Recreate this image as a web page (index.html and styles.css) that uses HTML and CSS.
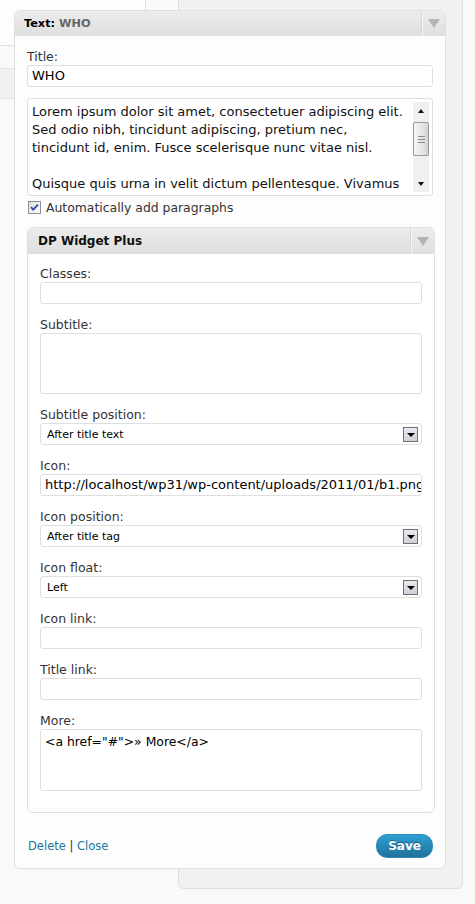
FILE: index.html
```html
<!DOCTYPE html>
<html>
<head>
<meta charset="utf-8">
<link rel="stylesheet" href="styles.css">
</head>
<body>
<div class="stage">
  <div class="bg-tl"></div>
  <div class="bg-mid"></div>
  <div class="bg-band"></div>
  <div class="bg-panel"></div>

  <div class="widget">
    <div class="widget-top">
      <h4 class="widget-title">Text:<span class="in-title"> WHO</span></h4>
      <div class="toggle"><span class="tri"></span></div>
    </div>
    <div class="widget-inside">
      <div class="lbl">Title:</div>
      <div class="field">WHO</div>

      <div class="ta">
        <div class="ta-text"><div>Lorem ipsum dolor sit amet, consectetuer adipiscing elit.</div><div>Sed odio nibh, tincidunt adipiscing, pretium nec,</div><div>tincidunt id, enim. Fusce scelerisque nunc vitae nisl.</div><div>&nbsp;</div><div>Quisque quis urna in velit dictum pellentesque. Vivamus</div></div>
        <div class="scrollbar">
          <div class="sb-btn"><span class="sb-up"></span></div>
          <div class="sb-track">
            <div class="sb-thumb"><span class="grip"></span><span class="grip"></span><span class="grip"></span></div>
          </div>
          <div class="sb-btn"><span class="sb-down"></span></div>
        </div>
      </div>

      <div class="check-row">
        <svg class="cb" width="13" height="13" viewBox="0 0 13 13">
          <defs>
            <linearGradient id="cbg" x1="0" y1="0" x2="1" y2="1">
              <stop offset="0" stop-color="#dcdcd6"/>
              <stop offset="1" stop-color="#ffffff"/>
            </linearGradient>
          </defs>
          <rect x="0.5" y="0.5" width="12" height="12" fill="url(#cbg)" stroke="#8a8f9c"/>
          <path d="M3 6.2 L5.2 8.6 L10 3.6" fill="none" stroke="#2f46a8" stroke-width="1.8"/>
        </svg>
        <span>Automatically add paragraphs</span>
      </div>

      <div class="sub-widget">
        <div class="sub-top">
          <h4 class="sub-title">DP Widget Plus</h4>
          <div class="toggle sub-toggle"><span class="tri"></span></div>
        </div>
        <div class="sub-inside">
          <div class="fld">
            <div class="lbl">Classes:</div>
            <div class="input"></div>
          </div>
          <div class="fld">
            <div class="lbl">Subtitle:</div>
            <div class="input area area-sub"></div>
          </div>
          <div class="fld">
            <div class="lbl">Subtitle position:</div>
            <div class="select"><span>After title text</span><span class="sel-btn"><span class="sel-tri"></span></span></div>
          </div>
          <div class="fld">
            <div class="lbl">Icon:</div>
            <div class="input">http://localhost/wp31/wp-content/uploads/2011/01/b1.png</div>
          </div>
          <div class="fld">
            <div class="lbl">Icon position:</div>
            <div class="select"><span>After title tag</span><span class="sel-btn"><span class="sel-tri"></span></span></div>
          </div>
          <div class="fld">
            <div class="lbl">Icon float:</div>
            <div class="select"><span>Left</span><span class="sel-btn"><span class="sel-tri"></span></span></div>
          </div>
          <div class="fld">
            <div class="lbl">Icon link:</div>
            <div class="input"></div>
          </div>
          <div class="fld">
            <div class="lbl">Title link:</div>
            <div class="input"></div>
          </div>
          <div class="fld">
            <div class="lbl">More:</div>
            <div class="input area area-more">&lt;a href="#"&gt;&raquo; More&lt;/a&gt;</div>
          </div>
        </div>
      </div>

      <div class="actions">
        <div class="links"><a href="#">Delete</a> <span class="sep">|</span> <a href="#">Close</a></div>
        <button class="save" type="button">Save</button>
      </div>
    </div>
  </div>
</div>
</body>
</html>
```

FILE: styles.css
```css
html, body {
  margin: 0;
  padding: 0;
}
body {
  background: #f9f9f9;
  font-family: "DejaVu Sans", Verdana, sans-serif;
  color: #333;
}
.stage {
  position: relative;
  width: 475px;
  height: 904px;
  overflow: hidden;
  padding-top: 10px;
  box-sizing: border-box;
}

/* backdrop */
.bg-tl {
  position: absolute;
  left: 0;
  top: 0;
  width: 145px;
  height: 45px;
  background: #fdfdfd;
  border-bottom: 1px solid #dfdfdf;
  border-right: 1px solid #dfdfdf;
}
.bg-mid {
  position: absolute;
  left: 146px;
  top: 0;
  width: 32px;
  height: 20px;
  background: #fafafa;
}
.bg-band {
  position: absolute;
  left: 0;
  top: 68px;
  width: 40px;
  height: 29px;
  background: #f1f1f1;
  border-top: 1px solid #e4e4e4;
  border-bottom: 1px solid #e4e4e4;
}
.bg-panel {
  position: absolute;
  left: 178px;
  top: -10px;
  width: 283px;
  height: 897px;
  background: #f1f1f1;
  border: 1px solid #dfdfdf;
  border-radius: 0 0 6px 6px;
}

/* widget */
.widget {
  position: relative;
  margin-left: 14px;
  width: 430px;
  border: 1px solid #dfdfdf;
  border-radius: 6px;
  background: #fdfdfd;
}
.widget-top {
  height: 25px;
  display: flex;
  align-items: center;
  background: linear-gradient(#ececec, #dfdfdf);
  border-radius: 5px 5px 0 0;
}
.widget-title {
  flex: 1;
  margin: 0;
  padding-left: 9px;
  font-size: 11.3px;
  font-weight: bold;
  color: #000;
}
.in-title {
  color: #666;
}
.toggle {
  width: 22px;
  height: 100%;
  border-left: 1px solid #f6f6f6;
  box-shadow: -1px 0 0 #d6d6d6;
  display: flex;
  align-items: center;
  justify-content: center;
}
.tri {
  width: 0;
  height: 0;
  border-left: 6px solid transparent;
  border-right: 6px solid transparent;
  border-top: 9px solid #b4b4b4;
}

.widget-inside {
  padding: 13px 10px 10px 12px;
}
.lbl {
  font-size: 12.5px;
  line-height: 16px;
  color: #333;
}
.field {
  width: 406px;
  height: 22px;
  box-sizing: border-box;
  border: 1px solid #dfdfdf;
  border-radius: 3px;
  background: #fff;
  padding: 0 4px;
  font-size: 13px;
  line-height: 20px;
  color: #000;
}

.ta {
  margin-top: 11px;
  width: 406px;
  height: 98px;
  box-sizing: border-box;
  border: 1px solid #dfdfdf;
  border-radius: 3px;
  background: #fff;
  display: flex;
}
.ta-text {
  flex: 1;
  padding: 4px 0 0 4px;
  font-size: 13px;
  line-height: 18px;
  color: #111;
  white-space: nowrap;
  overflow: hidden;
}
.scrollbar {
  width: 16px;
  margin: 3px 3px 3px 0;
  background: #f0f0ee;
  display: flex;
  flex-direction: column;
}
.sb-btn {
  height: 17px;
  display: flex;
  align-items: center;
  justify-content: center;
}
.sb-up {
  width: 0;
  height: 0;
  border-left: 3.5px solid transparent;
  border-right: 3.5px solid transparent;
  border-bottom: 4px solid #111;
}
.sb-down {
  width: 0;
  height: 0;
  border-left: 3.5px solid transparent;
  border-right: 3.5px solid transparent;
  border-top: 4px solid #111;
}
.sb-track {
  flex: 1;
  padding-top: 3px;
}
.sb-thumb {
  height: 34px;
  box-sizing: border-box;
  border: 1px solid #9a9a9a;
  border-radius: 2px;
  background: linear-gradient(90deg, #f4f4f4, #e2e2e2 70%, #cfcfcf);
  display: flex;
  flex-direction: column;
  align-items: center;
  justify-content: center;
  gap: 2px;
}
.grip {
  width: 7px;
  height: 1px;
  background: #8c8c8c;
}

.check-row {
  margin: 3px 0 12px 1px;
  height: 16px;
  display: flex;
  align-items: center;
  gap: 5px;
  font-size: 12.4px;
  color: #333;
}
.cb {
  display: block;
}

/* inner widget */
.sub-widget {
  width: 408px;
  box-sizing: border-box;
  border: 1px solid #dfdfdf;
  border-radius: 6px;
  background: #fff;
}
.sub-top {
  height: 26px;
  display: flex;
  align-items: center;
  background: linear-gradient(#ececec, #dfdfdf);
  border-radius: 5px 5px 0 0;
}
.sub-title {
  flex: 1;
  margin: 0;
  padding-left: 10px;
  font-size: 12px;
  font-weight: bold;
  color: #111;
}
.sub-inside {
  padding: 12px 12px 8px;
}
.fld {
  margin-bottom: 13px;
}
.input {
  width: 382px;
  height: 22px;
  box-sizing: border-box;
  border: 1px solid #dfdfdf;
  border-radius: 3px;
  background: #fff;
  padding: 0 4px;
  font-size: 13px;
  line-height: 20px;
  color: #000;
  white-space: nowrap;
  overflow: hidden;
}
.area {
  padding-top: 3px;
  line-height: 18px;
}
.area-sub {
  height: 61px;
}
.area-more {
  height: 62px;
  font-size: 12.4px;
}
.select {
  width: 382px;
  height: 22px;
  box-sizing: border-box;
  border: 1px solid #dfdfdf;
  border-radius: 3px;
  background: #fff;
  padding: 0 3px 0 6px;
  font-size: 11px;
  color: #000;
  display: flex;
  align-items: center;
  justify-content: space-between;
}
.sel-btn {
  width: 15px;
  height: 15px;
  box-sizing: border-box;
  border: 1px solid #6f6f6f;
  background: linear-gradient(#ece8f0, #d3cedb);
  display: flex;
  align-items: center;
  justify-content: center;
}
.sel-tri {
  width: 0;
  height: 0;
  border-left: 4px solid transparent;
  border-right: 4px solid transparent;
  border-top: 4px solid #000;
  margin-top: 1px;
}

/* actions */
.actions {
  margin-top: 21px;
  height: 24px;
  display: flex;
  align-items: center;
  justify-content: space-between;
  padding: 0 2px 0 1px;
}
.links {
  font-size: 11.5px;
  color: #333;
}
.links a {
  color: #21759b;
  text-decoration: none;
}
.save {
  width: 57px;
  height: 24px;
  border: 1px solid #298cba;
  border-radius: 11px;
  background: linear-gradient(#2e9fd2, #1f7199);
  color: #fff;
  font-family: "DejaVu Sans", Verdana, sans-serif;
  font-size: 12px;
  font-weight: bold;
  text-shadow: 0 -1px 0 rgba(0, 0, 0, 0.35);
  padding: 0;
  cursor: pointer;
}
```
